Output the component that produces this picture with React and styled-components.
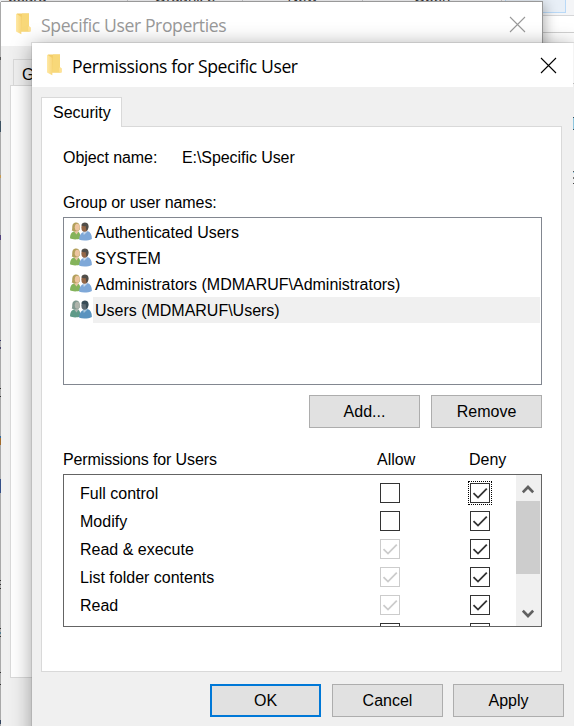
import React from 'react';
import styled, { createGlobalStyle, css } from 'styled-components';

const Global = createGlobalStyle`
  *, *::before, *::after { box-sizing: border-box; }
  body { margin: 0; overflow: hidden; }
  button { font: inherit; color: inherit; margin: 0; padding: 0; }
`;

const Desktop = styled.div`
  position: relative;
  width: 574px;
  height: 726px;
  overflow: hidden;
  background: #fff;
  color: #000;
  font: 16px/20px 'Liberation Sans', Arial, sans-serif;
  white-space: nowrap;
`;

const Ribbon = styled.div`
  display: grid;
  grid-template-columns: 128px 115px 120px 139px 72px;
  height: 16px;
  background: #f4f5f7;
  border-bottom: 1px solid #d5d6d8;
`;

const RibbonLabel = styled.div`
  display: flex;
  justify-content: center;
  height: 16px;
  padding-right: ${(p) => p.$shift || 0}px;
  line-height: 16px;
  font-size: 15px;
  color: #343434;
  border-right: 1px solid #c9cacc;
  span { margin-top: -11px; }
`;

const RibbonSelection = styled.div`
  width: 61px;
  height: 13px;
  margin-left: 3px;
  background: #e8eff7;
  border: 1px solid #b9d9f7;
  border-top: 0;
`;

const AddressBar = styled.div`
  height: 17px;
  border-bottom: 1px solid #d0d0d0;
`;

const EdgeStrip = styled.div`
  position: absolute;
  left: 0;
  top: 2px;
  width: 1px;
  height: 724px;
  background: #a9a9a9;
`;

const EdgeMark = styled.div`
  position: absolute;
  left: ${(p) => (p.$right ? 573 : 0)}px;
  top: ${(p) => p.$top}px;
  width: 1px;
  height: ${(p) => p.$h}px;
  background: ${(p) => p.$color};
`;

const Window = styled.section`
  position: absolute;
  display: flex;
  flex-direction: column;
  background: #f0f0f0;
`;

const BackWindow = styled(Window)`
  left: 1px;
  top: 1px;
  width: 542px;
  height: 760px;
  border: solid #999;
  border-width: 1px 1px 0 0;
  box-shadow: 2px 3px 12px rgba(0, 0, 0, 0.3);
`;

const FrontWindow = styled(Window)`
  left: 32px;
  top: 43px;
  width: 541px;
  height: 720px;
  box-shadow: 0 0 0 1px rgba(110, 110, 110, 0.18), 0 3px 20px rgba(0, 0, 0, 0.38);
`;

const TitleBar = styled.header`
  display: flex;
  align-items: center;
  flex: none;
  height: 44px;
  padding: 0 16px 0 15px;
  background: #fff;
  font: 17.6px/24px 'Open Sans', 'Noto Sans', sans-serif;
  letter-spacing: -0.39px;
  color: ${(p) => (p.$inactive ? '#999' : '#000')};
  svg { flex: none; }
`;

const Title = styled.h1`
  flex: 1;
  margin: 1px 0 0 10px;
  font: inherit;
`;

const BackTab = styled.div`
  width: 100px;
  height: 27px;
  margin: 13px 0 0 12px;
  padding: 5px 8px;
  border: 1px solid #d9d9d9;
  border-bottom: 0;
`;

const BackPanel = styled.div`
  height: 593px;
  margin: -1px 9px 0 9px;
  background: #fff;
  border: 1px solid #d9d9d9;
`;

const Tab = styled.div`
  position: relative;
  z-index: 1;
  width: 81px;
  height: 30px;
  margin: 10px 0 0 9px;
  padding: 5px 0 0 11px;
  background: #fff;
  border: 1px solid #d9d9d9;
  border-bottom: 0;
`;

const Panel = styled.div`
  display: flex;
  flex-direction: column;
  height: 546px;
  width: 521px;
  margin: -1px 0 0 9px;
  padding: 0 19px 0 21px;
  background: #fff;
  border: 1px solid #d9d9d9;
`;

const ObjectRow = styled.div`
  display: grid;
  grid-template-columns: 119px 1fr;
  margin-top: 21px;
  letter-spacing: -0.07px;
`;

const FieldLabel = styled.div`
  margin-top: 25px;
  letter-spacing: -0.1px;
`;

const UserList = styled.div`
  height: 168px;
  margin-top: 4px;
  padding: 1px;
  border: 1px solid #828790;
`;

const UserRow = styled.div`
  display: flex;
  align-items: center;
  height: 26px;
  padding-left: 5px;
`;

const UserName = styled.div`
  flex: 1;
  height: 26px;
  padding: 1px 0 0 2px;
  line-height: 26px;
  letter-spacing: -0.01px;
  background: ${(p) => (p.$selected ? '#f0f0f0' : 'transparent')};
`;

const ButtonRow = styled.div`
  display: flex;
  justify-content: flex-end;
  gap: 11px;
  margin-top: 10px;
`;

const Footer = styled(ButtonRow)`
  gap: 10px;
  margin: 12px 9px 0 0;
`;

const Button = styled.button`
  width: 111px;
  height: 33px;
  margin-right: ${(p) => (p.$primary ? 1 : 0)}px;
  background: #e1e1e1;
  border: ${(p) => (p.$primary ? '2px solid #0078d7' : '1px solid #adadad')};
`;

const columns = css`
  display: grid;
  grid-template-columns: 316px 90px 1fr;
`;

const PermissionHeader = styled.div`
  ${columns}
  grid-template-columns: 314px 92px 1fr;
  margin-top: 22px;
  letter-spacing: -0.13px;
`;

const HeaderCell = styled.span`
  letter-spacing: 0;
`;

const PermissionBox = styled.div`
  display: flex;
  height: 153px;
  margin-top: 4px;
  border: 1px solid #646464;
`;

const PermissionList = styled.div`
  flex: 1;
  overflow: hidden;
  padding-top: 4px;
`;

const PermissionRow = styled.div`
  ${columns}
  height: 28px;
  align-items: center;
`;

const PermissionName = styled.div`
  padding: 2px 0 0 16px;
`;

const Check = styled.div`
  display: flex;
  width: 20px;
  height: 20px;
  color: ${(p) => (p.$disabled ? '#ccc' : '#333')};
  border: 1px solid;
  background: #fff;
  ${(p) => p.$focused && css`outline: 1px dotted #000; outline-offset: 1px;`}
`;

const ScrollBar = styled.div`
  display: flex;
  flex-direction: column;
  width: 25px;
  padding-right: 1px;
  background: #f0f0f0;
`;

const ScrollButton = styled.div`
  display: flex;
  justify-content: center;
  align-items: center;
  height: 26px;
  padding-top: 2px;
`;

const ScrollThumb = styled.div`
  height: 73px;
  margin-bottom: auto;
  background: #cdcdcd;
`;

const Folder = () => (
  <svg width="15" height="22" viewBox="0 0 15 22">
    <defs>
      <linearGradient id="flap" x1="0" x2="1">
        <stop offset="0" stopColor="#ffe9a6" />
        <stop offset="1" stopColor="#f8d67a" />
      </linearGradient>
    </defs>
    <path d="M1 .5H13V13.5L14.5 14.5V18.5H1Z" fill="#f3cd68" />
    <path d="M6 .5H13V18.5H5Z" fill="#f8d879" />
    <path d="M0 .5L5.3 4V21.3L0 18.5Z" fill="url(#flap)" />
    <path d="M13 13.2L14.5 14.2V18.4H12.2V14Z" fill="#ffe293" />
  </svg>
);

const Close = () => (
  <svg width="17" height="17" viewBox="0 0 17 17" fill="none" stroke="currentColor" strokeWidth="1.1">
    <path d="M1 1L16 16M16 1L1 16" />
  </svg>
);

const People = ({ muted }) => (
  <svg width="23" height="20" viewBox="0.5 0.5 23 20">
    <path d="M.5 16.8C.6 12.3 2.4 10.5 5.2 9.8L9 10.2C10.7 11.8 11 14.2 10.8 17C8 18.2 3 18.3.5 16.8Z" fill={muted ? '#5f9a88' : '#84b35b'} />
    <path d="M4.5 10L7.1 13L9 10V8H5Z" fill={muted ? '#a9b5af' : '#e8c6a5'} />
    <path d="M2.2 8.9C3.5 7.5 1.5 2.5 5.1 1.2C8 .2 10.6 2 10.2 5.5C10.3 7.9 10.6 8.5 8.8 9.2L5 10Z" fill={muted ? '#7f9890' : '#b3a05c'} />
    <ellipse cx="7.7" cy="5.7" rx="2.4" ry="3.5" fill={muted ? '#afb4ac' : '#edc5a0'} />
    <path d="M9.7 18.2C9.7 14 11 11.4 14.5 10.2L18.1 9.5C21 10.3 22.4 13.2 22.4 17.5C18.7 19.3 13 19.4 9.7 18.2Z" fill={muted ? '#5a93bf' : '#7fa8d8'} />
    <path d="M13.3 9L14.3 13.5L18 10V8Z" fill={muted ? '#a6c5db' : '#c7d8eb'} />
    <ellipse cx="15.1" cy="6" rx="3.2" ry="4.3" fill={muted ? '#5d6a72' : '#956747'} />
    <path d="M12 4C11.8.2 18.9-.3 19.1 4.5C19.3 7 18.1 8.9 16.8 9.3L16.1 4.4C14.8 5 13.1 4.7 12 4Z" fill={muted ? '#384c56' : '#514e49'} />
  </svg>
);

const Tick = () => (
  <svg width="18" height="18" viewBox="0 0 18 18" fill="none" stroke="currentColor" strokeWidth="1.8">
    <path d="M2.5 9.2L7 13.6L15.8 4.6" />
  </svg>
);

const Chevron = ({ down }) => (
  <svg width="12" height="10" viewBox="0 0 12 10" fill="none" stroke="#606060" strokeWidth="2.7">
    <path d={down ? 'M.8 1.7L6 7L11.2 1.7' : 'M.8 8.3L6 3L11.2 8.3'} />
  </svg>
);

const users = ['Authenticated Users', 'SYSTEM', 'Administrators (MDMARUF\\Administrators)', 'Users (MDMARUF\\Users)'];
const permissions = [
  { name: 'Full control' },
  { name: 'Modify' },
  { name: 'Read & execute', inherited: true },
  { name: 'List folder contents', inherited: true },
  { name: 'Read', inherited: true },
  { name: 'Write' },
];
const marks = [
  [57, 3, '#555'], [121, 11, '#3d5263'], [175, 3, '#c69a52'], [235, 5, '#52417c'],
  [340, 1, '#333367'], [347, 2, '#49456b'], [388, 1, '#333'], [396, 1, '#333'],
  [436, 2, '#356a9b'], [438, 7, '#a16b2b'], [479, 14, '#344f88'], [580, 1, '#333'],
  [584, 1, '#333'], [588, 1, '#333'], [628, 1, '#333'], [632, 2, '#547f92'],
  [636, 1, '#333'], [672, 1, '#333'], [684, 1, '#333'], [720, 4, '#33445e'],
];
const rightMarks = [
  [43, 40, '#f4f4f4'], [83, 1, '#bbb'], [84, 33, '#efefef'], [117, 1, '#33505e'],
  [118, 11, '#8fc6de'], [129, 1, '#33505e'], [130, 596, '#efefef'],
  [171, 1, '#555'], [172, 1, '#8fc6de'], [177, 2, '#777'], [183, 1, '#444'],
];

export default function App() {
  return (
    <Desktop>
      <Global />
      <Ribbon>
        <RibbonLabel $shift={72}><span>board</span></RibbonLabel>
        <RibbonLabel><span>Organize</span></RibbonLabel>
        <RibbonLabel><span>New</span></RibbonLabel>
        <RibbonLabel><span>Open</span></RibbonLabel>
        <RibbonSelection />
      </Ribbon>
      <AddressBar />
      <BackWindow>
        <TitleBar $inactive>
          <Folder /><Title>Specific User Properties</Title><Close />
        </TitleBar>
        <BackTab>General</BackTab>
        <BackPanel />
      </BackWindow>
      <EdgeStrip />
      {marks.map(([top, h, color]) => <EdgeMark key={top} $top={top} $h={h} $color={color} />)}
      <FrontWindow>
        <TitleBar>
          <Folder /><Title>Permissions for Specific User</Title><Close />
        </TitleBar>
        <Tab>Security</Tab>
        <Panel>
          <ObjectRow><span>Object name:</span><span>E:\Specific User</span></ObjectRow>
          <FieldLabel>Group or user names:</FieldLabel>
          <UserList>
            {users.map((name, i) => (
              <UserRow key={name}>
                <People muted={i === 3} />
                <UserName $selected={i === 3}>{name}</UserName>
              </UserRow>
            ))}
          </UserList>
          <ButtonRow><Button>Add...</Button><Button>Remove</Button></ButtonRow>
          <PermissionHeader>
            <span>Permissions for Users</span><HeaderCell>Allow</HeaderCell><HeaderCell>Deny</HeaderCell>
          </PermissionHeader>
          <PermissionBox>
            <PermissionList>
              {permissions.map(({ name, inherited }, i) => (
                <PermissionRow key={name}>
                  <PermissionName>{name}</PermissionName>
                  <Check $disabled={inherited}>{inherited && <Tick />}</Check>
                  <Check $focused={i === 0}><Tick /></Check>
                </PermissionRow>
              ))}
            </PermissionList>
            <ScrollBar>
              <ScrollButton><Chevron /></ScrollButton>
              <ScrollThumb />
              <ScrollButton><Chevron down /></ScrollButton>
            </ScrollBar>
          </PermissionBox>
        </Panel>
        <Footer><Button $primary>OK</Button><Button>Cancel</Button><Button>Apply</Button></Footer>
      </FrontWindow>
      {rightMarks.map(([top, h, color]) => <EdgeMark $right key={top} $top={top} $h={h} $color={color} />)}
    </Desktop>
  );
}
